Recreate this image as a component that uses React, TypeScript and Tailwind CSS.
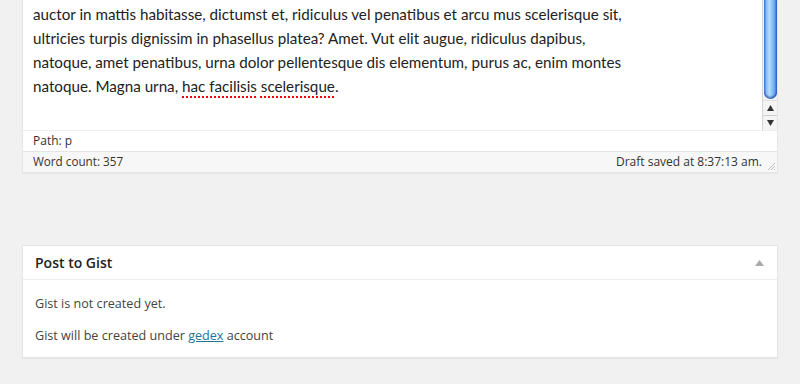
import React from "react";

const bodyFont = { fontFamily: "Lato, 'Open Sans', sans-serif" };

function Scrollbar() {
  return (
    <div className="flex flex-col w-[15px] border-l border-[#d4d4d4] bg-[#f4f4f4]">
      <div className="flex-1 flex justify-center pt-0">
        <div className="w-[13px] h-full rounded-b-[7px] bg-[linear-gradient(90deg,#4a7fdc_0%,#8bbdf5_20%,#b7dcfc_40%,#8fc6f8_60%,#6aa6ee_80%,#3566c8_100%)] shadow-[inset_0_-2px_2px_rgba(0,40,140,0.6)]" />
      </div>
      <div className="h-[15px] flex items-center justify-center border-t border-[#e0e0e0] mt-[1px]">
        <svg width="7" height="6" viewBox="0 0 7 6"><path d="M3.5 0 L7 6 L0 6 Z" fill="#333" /></svg>
      </div>
      <div className="h-[15px] flex items-center justify-center border-t border-[#cfcfcf] bg-[#f4f4f4]">
        <svg width="7" height="6" viewBox="0 0 7 6"><path d="M0 0 L7 0 L3.5 6 Z" fill="#333" /></svg>
      </div>
    </div>
  );
}

export default function App() {
  return (
    <div className="w-[800px] h-[384px] bg-[#f1f1f1] overflow-hidden" style={{ fontFamily: "'Open Sans', sans-serif" }}>
      <div className="mx-[22px] border-x border-b border-[#e5e5e5] bg-white shadow-[0_1px_1px_rgba(0,0,0,0.04)]">
        <div className="flex h-[130px]">
          <div className="flex-1 pl-[10px] pt-[2px] text-[15.2px] leading-[24px] text-[#222]" style={bodyFont}>
            <p>auctor in mattis habitasse, dictumst et, ridiculus vel penatibus et arcu mus scelerisque sit,</p>
            <p>ultricies turpis dignissim in phasellus platea? Amet. Vut elit augue, ridiculus dapibus,</p>
            <p>natoque, amet penatibus, urna dolor pellentesque dis elementum, purus ac, enim montes</p>
            <p>
              natoque. Magna urna,{" "}
              <span className="underline decoration-dotted decoration-[#e00] decoration-[2px] underline-offset-[4px]">hac facilisis</span>{" "}
              <span className="underline decoration-dotted decoration-[#e00] decoration-[2px] underline-offset-[4px]">scelerisque</span>.
            </p>
          </div>
          <Scrollbar />
        </div>
        <div className="h-[21px] border-t border-[#eeeeee] pl-[10px] text-[12px] leading-[20px] text-[#333]">Path: p</div>
        <div className="h-[21px] border-t border-[#e5e5e5] bg-[#f7f7f7] pl-[10px] pr-[15px] flex items-center justify-between text-[11.7px] text-[#333] relative">
          <span>Word count: 357</span>
          <span className="text-[12px]">Draft saved at 8:37:13 am.</span>
          <svg className="absolute right-[1px] bottom-[1px]" width="10" height="10" viewBox="0 0 10 10">
            <path d="M9 2 L2 9 M9 5 L5 9 M9 8 L8 9" stroke="#bbb" strokeWidth="1" />
          </svg>
        </div>
      </div>

      <div className="mx-[22px] mt-[72px] border border-[#e5e5e5] bg-white shadow-[0_1px_1px_rgba(0,0,0,0.04)]">
        <div className="h-[34px] flex items-center justify-between px-[12px] border-b border-[#eeeeee]">
          <span className="text-[14px] font-semibold text-[#222]">Post to Gist</span>
          <svg width="9" height="6" viewBox="0 0 9 6" className="mr-[1px]"><path d="M4.5 0 L9 6 L0 6 Z" fill="#aaa" /></svg>
        </div>
        <div className="px-[12px] pt-[14px] pb-[12px] text-[12.6px] leading-[19px] text-[#444]">
          <p>Gist is not created yet.</p>
          <p className="mt-[13px]">
            Gist will be created under <a className="text-[#21759b] underline" href="#">gedex</a> account
          </p>
        </div>
      </div>
    </div>
  );
}
